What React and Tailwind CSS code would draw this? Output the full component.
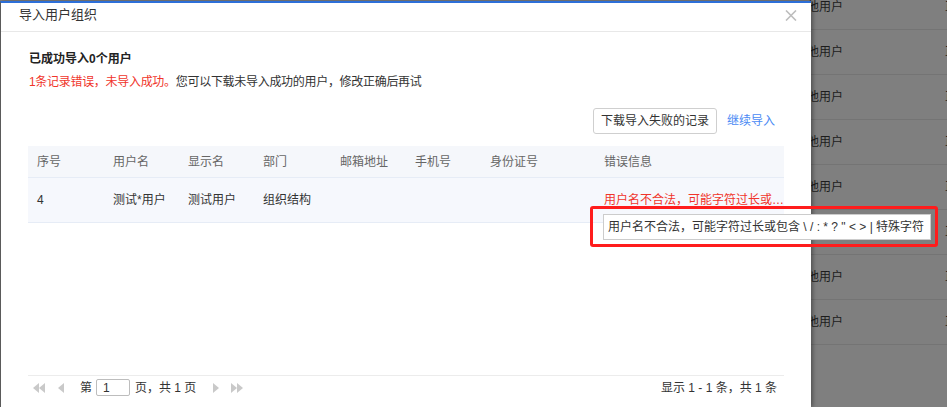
import React from "react";

const cols = [
  { key: "no", title: "序号", w: "w-[76px]" },
  { key: "user", title: "用户名", w: "w-[75px]" },
  { key: "name", title: "显示名", w: "w-[75px]" },
  { key: "dept", title: "部门", w: "w-[77px]" },
  { key: "mail", title: "邮箱地址", w: "w-[75px]" },
  { key: "phone", title: "手机号", w: "w-[75px]" },
  { key: "id", title: "身份证号", w: "w-[114px]" },
  { key: "err", title: "错误信息", w: "w-[189px]" },
];

const rows = [
  {
    no: "4",
    user: "测试*用户",
    name: "测试用户",
    dept: "组织结构",
    mail: "",
    phone: "",
    id: "",
    err: "用户名不合法，可能字符过长或包含 \\ / : * ? \" < > | 特殊字符",
  },
];

const font = { fontFamily: '"Liberation Sans", "Noto Sans CJK SC", sans-serif' };

function Tri({ dir = "left", double = false }) {
  const one = dir === "left" ? "M6 0L0 5L6 10Z" : "M0 0L6 5L0 10Z";
  const two = dir === "left" ? "M12 0L6 5L12 10Z" : "M6 0L12 5L6 10Z";
  return (
    <svg width={double ? 12 : 6} height="10" viewBox={double ? "0 0 12 10" : "0 0 6 10"} className="shrink-0">
      <path d={one} fill="#c9c9c9" />
      {double && <path d={two} fill="#c9c9c9" />}
    </svg>
  );
}

function Modal() {
  return (
    <div className="relative z-10 w-[811px] h-[406px] mt-[1px] shrink-0 bg-white border-l border-[#5a5a5a] border-t-2 border-t-[#2d6fd8] shadow-[2px_0_4px_rgba(0,0,0,0.35)] flex flex-col">
      {/* header */}
      <div className="h-[29px] shrink-0 border-b border-[#e8e8e8] flex items-start justify-between pl-[18px] pr-[14px]">
        <div className="pt-[3px] text-[13px] leading-[18px] text-[#333]">导入用户组织</div>
        <svg width="12" height="11" viewBox="0 0 12 11" className="mt-[7px]">
          <path d="M1 0.5L11 10.5M11 0.5L1 10.5" stroke="#bdbdbd" strokeWidth="1.6" />
        </svg>
      </div>

      {/* body */}
      <div className="flex-1 flex flex-col px-[27px] pb-[8px]">
        <div className="mt-[18px] pl-[1px] text-[12px] leading-[18px] font-bold text-[#222]">已成功导入0个用户</div>
        <div className="mt-[5px] pl-[1px] text-[12px] leading-[18px] text-[#333] tracking-[-0.3px]">
          <span className="text-[#f0352b]">1条记录错误，未导入成功。</span>
          您可以下载未导入成功的用户，修改正确后再试
        </div>

        <div className="mt-[17px] flex items-center justify-end pr-[9px]">
          <button className="h-[26px] w-[124px] border border-[#cfcfcf] rounded-[3px] bg-white text-[12px] text-[#333]">
            下载导入失败的记录
          </button>
          <span className="ml-[10px] text-[12px] text-[#4a8af4]">继续导入</span>
        </div>

        {/* table */}
        <div className="mt-[12px]">
          <div className="flex h-[32px] bg-[#f5f7fb] border-b border-[#e6ecf6] items-center">
            {cols.map((c) => (
              <div key={c.key} className={`${c.w} shrink-0 pl-[9px] text-[12px] text-[#666]`}>
                {c.title}
              </div>
            ))}
          </div>
          {rows.map((r, i) => (
            <div key={i} className="flex h-[45px] bg-[#f6f8fd] border-b border-[#e6ecf6] items-center">
              {cols.map((c) =>
                c.key === "err" ? (
                  <div key={c.key} className={`${c.w} shrink-0 pl-[9px] relative`}>
                    <div className="-mr-[4px] text-[12px] text-[#f0352b] whitespace-nowrap overflow-hidden text-ellipsis">
                      {r.err}
                    </div>
                    {/* hover tooltip */}
                    <div className="absolute left-[8px] top-[23px] w-[328px] h-[26px] bg-white border border-[#cccccc] flex items-center px-[4px] text-[12px] text-[#333] whitespace-nowrap">
                      {r.err}
                    </div>
                    {/* red annotation frame */}
                    <div className="absolute left-[-5px] top-[15px] w-[348px] h-[41px] border-[3px] border-[#ff1c1c] rounded-[3px]" />
                  </div>
                ) : (
                  <div key={c.key} className={`${c.w} shrink-0 pl-[9px] text-[12px] text-[#333]`}>
                    {r[c.key]}
                  </div>
                )
              )}
            </div>
          ))}
        </div>

        {/* pagination */}
        <div className="mt-auto border-t border-[#ececec] h-[24px] flex items-center justify-between">
          <div className="flex items-center text-[12px] text-[#333]">
            <span className="ml-[5px]"><Tri dir="left" double /></span>
            <span className="ml-[13px]"><Tri dir="left" /></span>
            <span className="ml-[16px]">第</span>
            <div className="ml-[4px] w-[34px] h-[17px] border border-[#bdbdbd] rounded-[2px] flex items-center pl-[6px] text-[12px] leading-none">
              1
            </div>
            <span className="ml-[5px]">页，共 1 页</span>
            <span className="ml-[17px]"><Tri dir="right" /></span>
            <span className="ml-[12px]"><Tri dir="right" double /></span>
          </div>
          <div className="pr-[7px] text-[12px] text-[#333]">显示 1 - 1 条，共 1 条</div>
        </div>
      </div>
    </div>
  );
}

export default function App() {
  const bgRows = Array.from({ length: 8 });
  return (
    <div className="w-[947px] h-[407px] bg-[#7f7f7f] overflow-hidden flex" style={font}>
      <Modal />
      <div className="-ml-[4px] -mt-[15px] flex-1 flex flex-col">
        {bgRows.map((_, i) => (
          <div key={i} className="h-[45px] shrink-0 border-b border-[#747474] flex items-center text-[12px] text-[#1c1c1c] whitespace-nowrap">
            <span className="w-[138px] shrink-0">他用户</span>
            <span>正常</span>
          </div>
        ))}
      </div>
    </div>
  );
}
